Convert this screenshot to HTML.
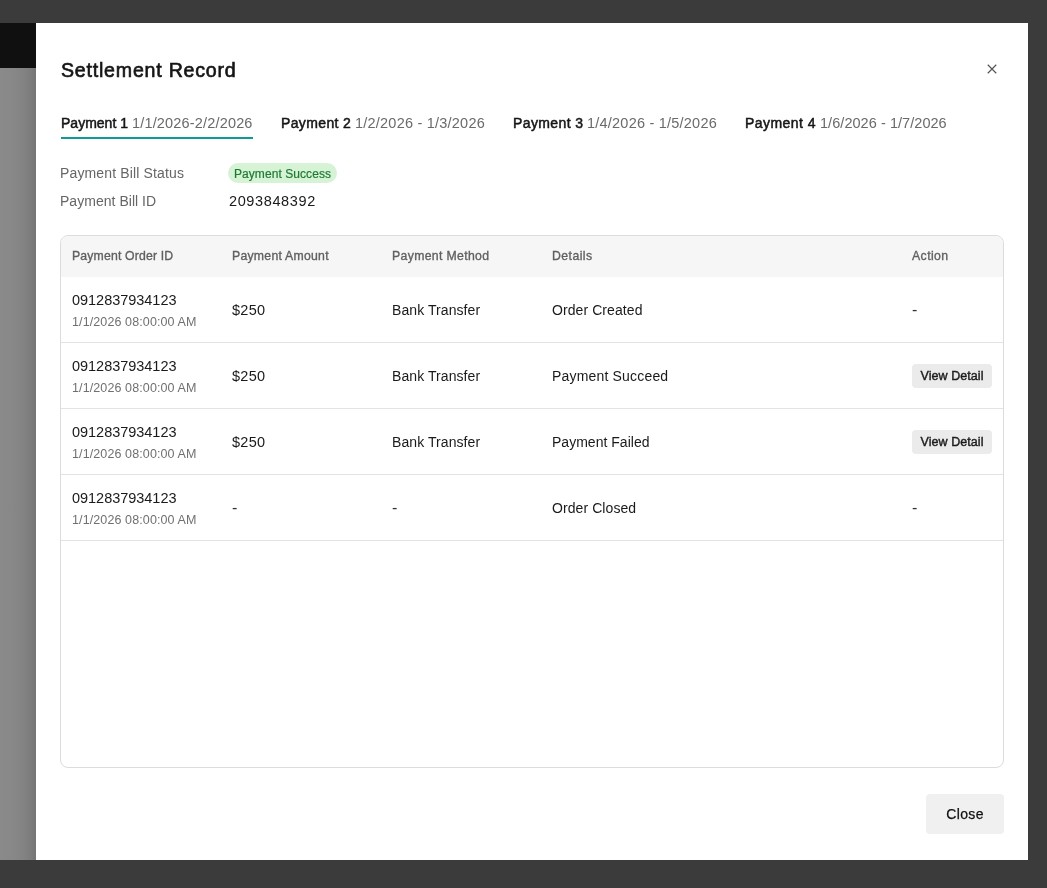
<!DOCTYPE html>
<html lang="en">
<head>
<meta charset="utf-8">
<title>Settlement Record</title>
<style>
*{box-sizing:border-box;margin:0;padding:0}
html,body{width:1047px;height:888px;overflow:hidden}
body{background:#3b3b3b;font-family:"Liberation Sans",Arial,sans-serif;color:#1a1a1a;position:relative}
.bg-top{position:absolute;left:0;top:23px;width:40px;height:45px;background:#101010}
.bg-side{position:absolute;left:0;top:68px;width:40px;height:792px;background:linear-gradient(90deg,#8a8a8a 0,#888 12px,#838383 23px,#7c7c7c 31px,#747474 36px)}
.modal{will-change:transform;position:absolute;left:36px;top:23px;width:992px;height:837px;background:#fff}
.title{position:absolute;left:25px;top:33px;font-size:19.6px;line-height:28px;font-weight:400;color:#151515;-webkit-text-stroke:.65px #151515;letter-spacing:.78px;white-space:nowrap}
.close-x{position:absolute;left:948px;top:38px;width:16px;height:16px}
.tabs{position:absolute;left:0;top:88px;height:28px;width:992px}
.tab{position:absolute;top:0;height:28px;line-height:24px;white-space:nowrap}
.tab b{position:absolute;left:0;top:0;font-weight:400;color:#161616;-webkit-text-stroke:.5px #161616;font-size:14px}
.tab span{position:absolute;top:0;font-size:14.5px;color:#6a6a6a}
.tab.active:after{content:"";position:absolute;left:0;width:192px;top:26px;height:2px;background:#0d9b97}
.info{position:absolute;left:24px;font-size:14px;line-height:20px;color:#666;white-space:nowrap}
.val{position:absolute;left:193px;font-size:14.5px;line-height:20px;color:#1a1a1a;white-space:nowrap;letter-spacing:.62px}
.badge{position:absolute;left:192px;top:140px;height:20px;width:109px;border-radius:10px;background:#d6f3d6;color:#1f7a33;-webkit-text-stroke:.2px #1f7a33;font-size:12px;line-height:22px;text-align:center;white-space:nowrap;letter-spacing:.07px}
.tablebox{position:absolute;left:24px;top:212px;width:944px;height:533px;border:1px solid #dcdcdc;border-radius:8px;overflow:hidden}
table{border-collapse:separate;border-spacing:0;width:942px;table-layout:fixed}
th{height:41px;background:#f6f6f6;text-align:left;font-weight:400;font-size:12.25px;color:#606060;-webkit-text-stroke:.33px #606060;padding:0 0 1px 11px;white-space:nowrap}
td{height:66px;border-bottom:1px solid #e3e3e3;padding:0 0 0 11px;font-size:14px;color:#1a1a1a;vertical-align:middle;white-space:nowrap;letter-spacing:.08px}
td .id{display:block;line-height:20px;font-size:14.5px;letter-spacing:-.03px}
td .dt{display:block;line-height:18px;font-size:12.5px;color:#707070;margin-top:3px;letter-spacing:.11px}
td.dash{font-size:16px;color:#333}
td.c1{vertical-align:top;padding-top:13px}
td.amt{font-size:14.5px;letter-spacing:.25px}
.vbtn{display:inline-block;width:80px;height:24px;border-radius:4px;background:#ebebeb;font-size:12.5px;line-height:25px;text-align:center;color:#1c1c1c;-webkit-text-stroke:.42px #1c1c1c;vertical-align:middle;letter-spacing:.07px}
.closebtn{position:absolute;left:890px;top:771px;width:78px;height:40px;border-radius:4px;background:#f0f0f0;font-size:14px;line-height:40px;text-align:center;color:#111;-webkit-text-stroke:.25px #111;letter-spacing:.35px}
</style>
</head>
<body>
<div class="bg-top"></div>
<div class="bg-side"></div>
<div class="modal">
  <div class="title">Settlement Record</div>
  <svg class="close-x" viewBox="0 0 16 16"><path d="M3.75 3.75 L12.25 12.25 M12.25 3.75 L3.75 12.25" stroke="#555" stroke-width="1.2" fill="none"/></svg>
  <div class="tabs">
    <div class="tab active" style="left:25px"><b style="letter-spacing:.01px">Payment 1</b> <span style="left:71px;letter-spacing:.17px">1/1/2026-2/2/2026</span></div>
    <div class="tab" style="left:245px"><b style="letter-spacing:.37px">Payment 2</b> <span style="left:74px;letter-spacing:.22px">1/2/2026 - 1/3/2026</span></div>
    <div class="tab" style="left:477px"><b style="letter-spacing:.38px">Payment 3</b> <span style="left:74px;letter-spacing:.22px">1/4/2026 - 1/5/2026</span></div>
    <div class="tab" style="left:709px"><b style="letter-spacing:.45px">Payment 4</b> <span style="left:75px;letter-spacing:.05px">1/6/2026 - 1/7/2026</span></div>
  </div>
  <div class="info" style="top:140px;letter-spacing:.14px">Payment Bill Status</div>
  <div class="badge">Payment Success</div>
  <div class="info" style="top:168px;letter-spacing:.03px">Payment Bill ID</div>
  <div class="val" style="top:168px">2093848392</div>
  <div class="tablebox">
    <table>
      <colgroup><col style="width:160px"><col style="width:160px"><col style="width:160px"><col style="width:360px"><col style="width:102px"></colgroup>
      <thead><tr><th style="letter-spacing:.16px">Payment Order ID</th><th style="letter-spacing:.25px">Payment Amount</th><th style="letter-spacing:.34px">Payment Method</th><th style="letter-spacing:.45px">Details</th><th style="letter-spacing:.42px">Action</th></tr></thead>
      <tbody>
        <tr><td class="c1"><span class="id">0912837934123</span><span class="dt">1/1/2026 08:00:00 AM</span></td><td class="amt">$250</td><td>Bank Transfer</td><td>Order Created</td><td class="dash">-</td></tr>
        <tr><td class="c1"><span class="id">0912837934123</span><span class="dt">1/1/2026 08:00:00 AM</span></td><td class="amt">$250</td><td>Bank Transfer</td><td style="letter-spacing:.18px">Payment Succeed</td><td><span class="vbtn">View Detail</span></td></tr>
        <tr><td class="c1"><span class="id">0912837934123</span><span class="dt">1/1/2026 08:00:00 AM</span></td><td class="amt">$250</td><td>Bank Transfer</td><td style="letter-spacing:.02px">Payment Failed</td><td><span class="vbtn">View Detail</span></td></tr>
        <tr><td class="c1"><span class="id">0912837934123</span><span class="dt">1/1/2026 08:00:00 AM</span></td><td class="dash">-</td><td class="dash">-</td><td>Order Closed</td><td class="dash">-</td></tr>
      </tbody>
    </table>
  </div>
  <div class="closebtn">Close</div>
</div>
</body>
</html>
